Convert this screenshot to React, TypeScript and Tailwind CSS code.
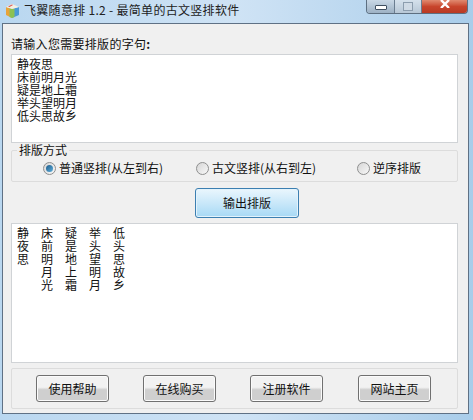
const INPUT_LINES = ["静夜思", "床前明月光", "疑是地上霜", "举头望明月", "低头思故乡"];
const FONT = "font-['Noto_Sans_CJK_SC','Liberation_Sans',sans-serif]";

function AppIcon() {
  return (
    <svg width="15" height="16" viewBox="0 0 15 16" className="mt-[3px] ml-[5px] shrink-0">
      <path d="M1 4 L7 6 V15 L1 12 Z" fill="#e8a33a" />
      <path d="M7 6 L14 4 V12 L7 15 Z" fill="#4a9ad6" />
      <path d="M4.5 5 L9.5 6 V14 L7 15 L4.5 14 Z" fill="#8cc152" />
      <path d="M1 4 L7 1 L14 4 L7 6 Z" fill="#f4efe2" />
      <path d="M3 3.5 L7 1.5 L8 2 L4.5 4 Z" fill="#d9534f" />
    </svg>
  );
}

function Caption() {
  return (
    <div className="flex h-[14px] w-[102px] shrink-0 mr-[5px] overflow-hidden rounded-b-[4px] border border-t-0 border-[#5d6f81]">
      <div className="flex w-[28px] items-center justify-center border-r border-[#6a7d90] bg-gradient-to-b from-[#c9d8e6] to-[#9db1c4]">
        <div className="mt-[1px] h-[5px] w-[12px] rounded-[1px] border border-[#3f4f60] bg-white" />
      </div>
      <div className="flex w-[27px] items-center justify-center border-r border-[#6a7d90] bg-gradient-to-b from-[#d5e1ec] to-[#b7c7d6]">
        <div className="h-[9px] w-[10px] border border-[#8c9dae] bg-[#cfdae5]" />
      </div>
      <div className="flex flex-1 items-start justify-center bg-gradient-to-b from-[#e08a70] via-[#c8452c] to-[#b83a24]">
        <svg width="12" height="8" viewBox="0 0 12 8">
          <path d="M2 0 L10 8 M10 0 L2 8" stroke="#fff" strokeWidth="2.4" />
        </svg>
      </div>
    </div>
  );
}

function Radio({ label, checked, width }: { label: string; checked?: boolean; width: string }) {
  return (
    <div className={`flex items-center gap-[3px] ${width}`}>
      <div className="flex h-[13px] w-[13px] items-center justify-center rounded-full border border-[#8e8f8f] bg-gradient-to-br from-[#d6d6d6] to-[#f8f8f8]">
        {checked && <div className="h-[7px] w-[7px] rounded-full bg-gradient-to-br from-[#1c5b8a] to-[#5fb0dc]" />}
      </div>
      <span className="text-[12px] leading-[14px] text-[#111]">{label}</span>
    </div>
  );
}

function FooterButton({ label }: { label: string }) {
  return (
    <button className="h-[27px] w-[73px] rounded-[3px] border border-[#707070] bg-gradient-to-b from-[#f2f2f2] from-45% to-[#cfcfcf] to-55% text-[12px] text-[#111] shadow-[inset_0_0_0_1px_#fbfbfb]">
      {label}
    </button>
  );
}

export default function App() {
  return (
    <div className={`h-[420px] w-[473px] overflow-hidden bg-gradient-to-r from-[#b9d7f0] via-[#cfe3f5] to-[#a9cdea] ${FONT}`}>
      <div className="flex h-[23px] items-start">
        <AppIcon />
        <span className="ml-[4px] mt-[2px] flex-1 whitespace-nowrap text-[12px] leading-[16px] tracking-[0.3px] text-[#222]">
          飞翼随意排 1.2 - 最简单的古文竖排软件
        </span>
        <Caption />
      </div>

      <div className="ml-[2px] flex h-[391px] w-[467px] flex-col border border-[#5f7185] bg-[#f0f0f0] pl-[8px] pr-[9px]">
        <div className="mt-[12px] h-[16px] text-[12px] leading-[16px] tracking-[0.3px] text-[#111]">
          请输入您需要排版的字句<span className="font-bold">:</span>
        </div>

        <div className="mt-[2px] h-[89px] w-[447px] border border-[#d0d3d6] bg-white px-[5px] pt-[2px] text-[12px] leading-[13px] text-[#111]">
          {INPUT_LINES.map((line) => (
            <div key={line}>{line}</div>
          ))}
        </div>

        <fieldset className="mt-[1px] h-[38px] w-[447px] rounded-[2px] border border-[#dcdcdc]">
          <legend className="ml-[5px] px-[2px] text-[12px] leading-[12px] text-[#111]">排版方式</legend>
          <div className="mt-[5px] flex items-center pl-[31px]">
            <Radio label="普通竖排(从左到右)" checked width="w-[153px]" />
            <Radio label="古文竖排(从右到左)" width="w-[161px]" />
            <Radio label="逆序排版" width="w-[70px]" />
          </div>
        </fieldset>

        <button className="ml-[184px] mt-[6px] h-[30px] w-[104px] rounded-[3px] border border-[#3c7fb1] bg-gradient-to-b from-[#eaf6fd] to-[#a7d9f5] text-[12px] text-[#111] shadow-[inset_0_0_0_1px_#e3f3fc]">
          输出排版
        </button>

        <div className="mt-[5px] flex h-[140px] w-[447px] gap-[12px] border border-[#d0d3d6] bg-white px-[5px] pt-[2px] text-[12px] leading-[13px] text-[#111]">
          {INPUT_LINES.map((line) => (
            <div key={line} className="w-[12px]">
              {line.split("").map((ch, i) => (
                <div key={i}>{ch}</div>
              ))}
            </div>
          ))}
        </div>

        <div className="mt-[5px] flex h-[41px] w-[447px] items-center gap-[34px] rounded-[2px] border border-[#dcdcdc] pl-[24px]">
          <FooterButton label="使用帮助" />
          <FooterButton label="在线购买" />
          <FooterButton label="注册软件" />
          <div className="ml-[1px]">
            <FooterButton label="网站主页" />
          </div>
        </div>
      </div>
    </div>
  );
}
